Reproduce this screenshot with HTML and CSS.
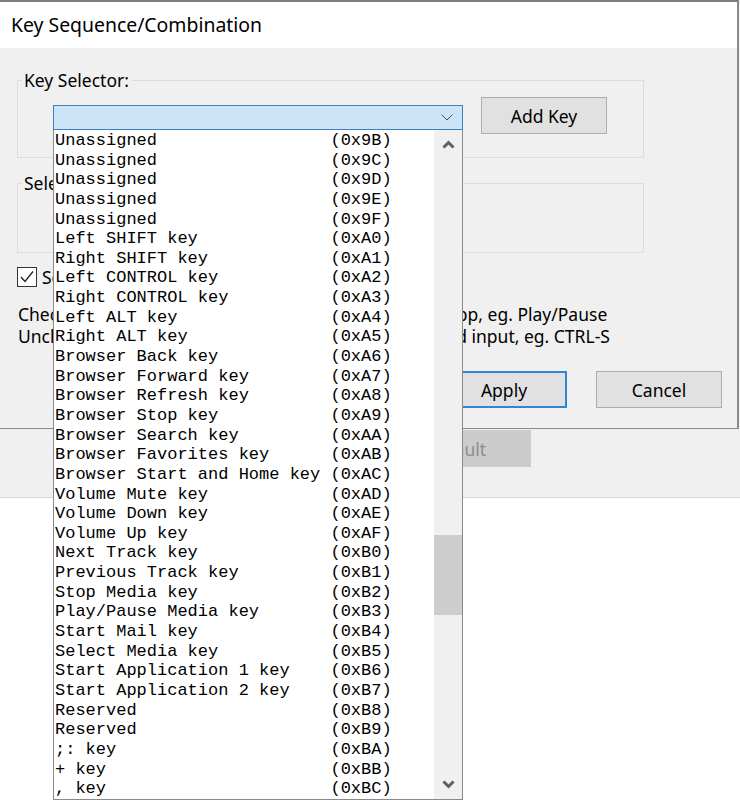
FILE: index.html
```html
<!DOCTYPE html>
<html>
<head>
<meta charset="utf-8">
<link rel="stylesheet" href="styles.css">
</head>
<body>
<div class="desktop">
  <div class="backwin">
    <div class="back-row">
      <div class="btn btn-disabled">Default</div>
    </div>
  </div>

  <div class="dialog">
    <div class="titlebar">Key Sequence/Combination</div>
    <div class="dlg-body">
      <div class="group g1">
        <div class="legend">Key Selector:</div>
        <div class="sel-row">
          <div class="combo">
            <svg class="combo-chev" width="12" height="7" viewBox="0 0 12 7"><polyline points="0.5,0.5 6,6 11.5,0.5" fill="none" stroke="#4a4a4a" stroke-width="1"/></svg>
          </div>
          <div class="btn add-btn">Add Key</div>
        </div>
      </div>
      <div class="group g2">
        <div class="legend">Selected Keys:</div>
      </div>
      <div class="check-row">
        <span class="checkbox"><svg width="18" height="18" viewBox="0 0 18 18"><polyline points="3,9 7,13.5 15,3.5" fill="none" stroke="#222" stroke-width="1.3"/></svg></span>
        <span class="check-label">Send as media key</span>
      </div>
      <p class="help">Checked: key works even without focus in any other app, eg. Play/Pause<br>Unchecked: key is sent as keystroke just to the focused input, eg. CTRL-S</p>
      <div class="actions">
        <div class="btn btn-default">Apply</div>
        <div class="btn">Cancel</div>
      </div>
    </div>
  </div>

  <div class="droplist">
    <div class="items">
      <div class="row"><span class="name">Unassigned</span><span>(0x9B)</span></div>
      <div class="row"><span class="name">Unassigned</span><span>(0x9C)</span></div>
      <div class="row"><span class="name">Unassigned</span><span>(0x9D)</span></div>
      <div class="row"><span class="name">Unassigned</span><span>(0x9E)</span></div>
      <div class="row"><span class="name">Unassigned</span><span>(0x9F)</span></div>
      <div class="row"><span class="name">Left SHIFT key</span><span>(0xA0)</span></div>
      <div class="row"><span class="name">Right SHIFT key</span><span>(0xA1)</span></div>
      <div class="row"><span class="name">Left CONTROL key</span><span>(0xA2)</span></div>
      <div class="row"><span class="name">Right CONTROL key</span><span>(0xA3)</span></div>
      <div class="row"><span class="name">Left ALT key</span><span>(0xA4)</span></div>
      <div class="row"><span class="name">Right ALT key</span><span>(0xA5)</span></div>
      <div class="row"><span class="name">Browser Back key</span><span>(0xA6)</span></div>
      <div class="row"><span class="name">Browser Forward key</span><span>(0xA7)</span></div>
      <div class="row"><span class="name">Browser Refresh key</span><span>(0xA8)</span></div>
      <div class="row"><span class="name">Browser Stop key</span><span>(0xA9)</span></div>
      <div class="row"><span class="name">Browser Search key</span><span>(0xAA)</span></div>
      <div class="row"><span class="name">Browser Favorites key</span><span>(0xAB)</span></div>
      <div class="row"><span class="name">Browser Start and Home key</span><span>(0xAC)</span></div>
      <div class="row"><span class="name">Volume Mute key</span><span>(0xAD)</span></div>
      <div class="row"><span class="name">Volume Down key</span><span>(0xAE)</span></div>
      <div class="row"><span class="name">Volume Up key</span><span>(0xAF)</span></div>
      <div class="row"><span class="name">Next Track key</span><span>(0xB0)</span></div>
      <div class="row"><span class="name">Previous Track key</span><span>(0xB1)</span></div>
      <div class="row"><span class="name">Stop Media key</span><span>(0xB2)</span></div>
      <div class="row"><span class="name">Play/Pause Media key</span><span>(0xB3)</span></div>
      <div class="row"><span class="name">Start Mail key</span><span>(0xB4)</span></div>
      <div class="row"><span class="name">Select Media key</span><span>(0xB5)</span></div>
      <div class="row"><span class="name">Start Application 1 key</span><span>(0xB6)</span></div>
      <div class="row"><span class="name">Start Application 2 key</span><span>(0xB7)</span></div>
      <div class="row"><span class="name">Reserved</span><span>(0xB8)</span></div>
      <div class="row"><span class="name">Reserved</span><span>(0xB9)</span></div>
      <div class="row"><span class="name">;: key</span><span>(0xBA)</span></div>
      <div class="row"><span class="name">+ key</span><span>(0xBB)</span></div>
      <div class="row"><span class="name">, key</span><span>(0xBC)</span></div>
    </div>
    <div class="scrollbar">
      <div class="sb-btn"><svg width="13" height="9" viewBox="0 0 13 9"><polyline points="1.5,7.5 6.5,2.5 11.5,7.5" fill="none" stroke="#606060" stroke-width="3"/></svg></div>
      <div class="sb-track"><div class="sb-thumb" style="margin-top:376px"></div></div>
      <div class="sb-btn"><svg width="13" height="9" viewBox="0 0 13 9"><polyline points="1.5,1.5 6.5,6.5 11.5,1.5" fill="none" stroke="#606060" stroke-width="3"/></svg></div>
    </div>
  </div>
</div>
</body>
</html>
```

FILE: styles.css
```css
* { box-sizing: border-box; }
html, body { margin: 0; padding: 0; background: #ffffff; }
body { font-family: "Noto Sans", "Open Sans", sans-serif; font-size: 17.5px; color: #000; }

.desktop { position: relative; width: 740px; height: 800px; overflow: hidden; background: #ffffff; }

.backwin {
  position: absolute; left: 0; top: 0; width: 740px; height: 498px;
  background: #f0f0f0; border-bottom: 1px solid #d4d4d4;
  display: flex; flex-direction: column; justify-content: flex-end;
}
.back-row { display: flex; padding: 0 0 30px 381px; }

.dialog {
  position: absolute; left: 0; top: 0; width: 739px;
  background: #f0f0f0;
  border-top: 2px solid #7d7d7d; border-right: 2px solid #8a8a8a; border-bottom: 1px solid #8a8a8a;
}
.titlebar {
  height: 46px; line-height: 46px; background: #ffffff;
  padding-left: 11px; font-size: 19.4px; color: #000;
}
.dlg-body { padding: 32px 15px 20px 17px; }

.group { border: 1px solid #dcdcdc; width: 627px; }
.legend {
  width: fit-content; margin: -12px 0 0 4px; padding: 0 2px;
  background: #f0f0f0; line-height: 22px;
}
.g1 { padding-bottom: 23px; }
.sel-row { display: flex; align-items: flex-start; margin-top: 6px; padding-left: 35px; }
.combo {
  width: 410px; height: 25px; margin-top: 8px;
  background: #cce4f7; border: 1px solid #3f7fc0;
  display: flex; align-items: center; justify-content: flex-end; padding-right: 9px;
}
.g2 { margin-top: 25px; height: 70px; }

.btn {
  width: 126px; height: 37px; display: flex; align-items: center; justify-content: center;
  background: #e1e1e1; border: 1px solid #adadad; font-size: 17.5px;
}
.add-btn { margin-left: 18px; }
.btn-default { border: 2px solid #2d86d6; }
.btn-disabled { width: 150px; background: #cccccc; border-color: #cccccc; color: #8d8d8d; }

.check-row { display: flex; align-items: center; margin-top: 14px; height: 20px; }
.checkbox {
  width: 20px; height: 20px; border: 1px solid #333; background: #fff;
  display: flex; align-items: center; justify-content: center;
}
.check-label { margin-left: 5px; }

.help { margin: 17px 0 0 1px; line-height: 21.5px; white-space: nowrap; }

.actions { display: flex; justify-content: flex-end; gap: 29px; margin-top: 24px; }

.droplist {
  position: absolute; left: 53px; top: 130px; width: 410px; height: 670px;
  background: #ffffff; border: 1px solid #8a8a8a; border-top: none;
  display: flex; overflow: hidden;
}
.items {
  flex: 1; padding: 1px 0 0 1px; overflow: hidden;
  font-family: "Liberation Mono", "DejaVu Sans Mono", monospace; font-size: 17px;
}
.row { display: flex; height: 19.65px; line-height: 19.65px; white-space: pre; }
.row .name { width: 27ch; }

.scrollbar { width: 28px; background: #f0f0f0; display: flex; flex-direction: column; }
.sb-btn { height: 29px; display: flex; align-items: center; justify-content: center; }
.sb-track { flex: 1; }
.sb-thumb { height: 80px; background: #cdcdcd; }
```
